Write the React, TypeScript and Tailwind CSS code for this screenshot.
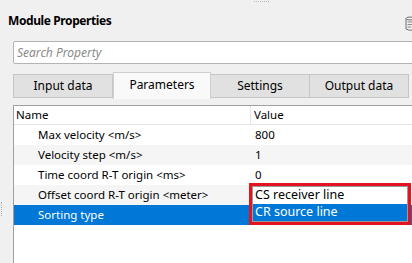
import React from "react";

const rows = [
  { name: "Max velocity <m/s>", value: "800" },
  { name: "Velocity step <m/s>", value: "1" },
  { name: "Time coord R-T origin <ms>", value: "0" },
  { name: "Offset coord R-T origin <meter>", value: "" },
  { name: "Sorting type", value: "" },
];

const tabs = ["Input data", "Parameters", "Settings", "Output data"];

function DbIcon() {
  return (
    <svg width="12" height="17" viewBox="0 0 12 17" className="shrink-0">
      <ellipse cx="5" cy="2.5" rx="4" ry="1.5" fill="none" stroke="#707070" strokeWidth="1" />
      <path d="M1 2.5 V13 Q5 15 7 14" fill="none" stroke="#707070" strokeWidth="1" />
      <path d="M9 2.5 V8" fill="none" stroke="#707070" strokeWidth="1" />
      <path d="M2.5 6 H8 M2.5 8.5 H8 M2.5 11 H6" stroke="#8a8a8a" strokeWidth="1" />
      <rect x="8" y="9" width="4" height="8" fill="#303030" />
    </svg>
  );
}

export default function App() {
  return (
    <div className="relative w-[412px] h-[263px] overflow-hidden bg-[#f0f0f0] font-['Noto_Sans',sans-serif] text-[11.5px] text-black">
      {/* dock grip */}
      <div className="absolute left-[254px] top-[1px] w-[15px] h-[2px] border-t border-dotted border-[#b8b8b8]" />

      {/* title bar */}
      <div className="flex items-center justify-between h-[41px] pl-[8px] pt-[1px]">
        <span className="font-bold text-[12px] tracking-[-0.4px]">Module Properties</span>
        <div className="mr-[-5px] mt-[6px]">
          <DbIcon />
        </div>
      </div>

      {/* search */}
      <div className="ml-[13px] h-[23px] bg-white border border-[#b4b4b4] rounded-[2px] flex items-center pl-[3px] mr-[-4px]">
        <span className="italic text-[#8a8a8a] text-[12px]">Search Property</span>
      </div>

      {/* tabs */}
      <div className="flex items-end ml-[13px] mt-[7px] h-[27px] text-[12px]">
        {tabs.map((t) =>
          t === "Parameters" ? (
            <div
              key={t}
              className="w-[98px] h-[27px] -mb-[1px] bg-[#f9f9f9] border border-b-0 border-[#cfcfcf] flex items-center justify-center pb-[2px] z-10"
            >
              {t}
            </div>
          ) : (
            <div
              key={t}
              className="w-[100px] h-[24px] bg-[#e1e1e1] border border-[#c6c6c6] -ml-[1px] first:ml-0 flex items-center justify-center"
            >
              {t}
            </div>
          )
        )}
      </div>

      {/* table */}
      <div className="flex">
        <div className="w-[13px] shrink-0 relative">
          <div className="absolute left-[1px] top-[104px] h-[14px] border-l border-dotted border-[#a8a8a8]" />
        </div>
        <div className="mt-[7px] flex-1 bg-white border-l border-t border-[#a0a0a0] h-[170px]">
          <div className="flex h-[19px] border-b border-[#e5e5e5] items-center">
            <div className="w-[237px] pl-[2px] border-r border-[#e5e5e5] h-full flex items-center">Name</div>
            <div className="pl-[3px]">Value</div>
          </div>
          {rows.map((r, i) => {
            const sel = i === 4;
            const bg = sel ? "bg-[#0078d7] text-white" : i % 2 === 1 ? "bg-[#f5f5f5]" : "bg-white";
            return (
              <div key={r.name} className={`flex h-[20px] items-center ${bg}`}>
                <div className="w-[237px] pl-[24px]">{r.name}</div>
                <div className="pl-[4px]">{r.value}</div>
              </div>
            );
          })}
        </div>
      </div>

      {/* combo popup */}
      <div className="absolute left-[249px] top-[183px] w-[162px] h-[42px] border-[3px] border-[#e3141f] bg-white">
        <div className="h-full border border-[#9a9a9a] flex flex-col">
          <div className="h-[17px] flex items-center pl-[2px] text-[12.5px]">CS receiver line</div>
          <div className="h-[17px] flex items-center pl-[2px] bg-[#0078d7] text-white text-[12.5px]">CR source line</div>
        </div>
      </div>
    </div>
  );
}
